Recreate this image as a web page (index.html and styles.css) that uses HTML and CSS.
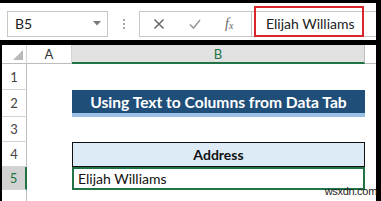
FILE: index.html
```html
<!DOCTYPE html>
<html lang="en">
<head>
    <meta charset="UTF-8">
    <title>Text to Columns</title>
    <link rel="stylesheet" href="styles.css">
</head>
<body>
    <div class="frame">
        <!-- Formula bar -->
        <div class="formula-bar">
            <div class="name-box">
                <span>B5</span>
                <svg class="caret" width="8" height="5" viewBox="0 0 8 5"><path d="M0 0H8L4 4.5Z" fill="#7a7a7a"/></svg>
            </div>
            <div class="dots"><i></i><i></i><i></i></div>
            <div class="fx-box">
                <svg width="12" height="12" viewBox="0 0 12 12"><path d="M1.5 1.5L10.5 10.5M10.5 1.5L1.5 10.5" stroke="#6b6b6b" stroke-width="1.6"/></svg>
                <svg width="12" height="12" viewBox="0 0 12 12"><path d="M1 6.5L4.5 10L11 2" stroke="#9a9a9a" stroke-width="1.6" fill="none"/></svg>
                <span class="fx">f<sub>x</sub></span>
            </div>
            <div class="formula-input">
                <span>Elijah Williams</span>
                <div class="highlight"></div>
            </div>
        </div>

        <!-- Sheet -->
        <div class="sheet">
            <div class="corner"><svg width="10" height="10" viewBox="0 0 10 10"><path d="M10 0V10H0Z" fill="#b9b9b9"/></svg></div>
            <div class="col-head">A</div>
            <div class="col-head active">B</div>
            <div class="col-rest"></div>

            <div class="row-head">1</div>
            <div class="cell"></div>
            <div class="cell"></div>
            <div class="cell"></div>

            <div class="row-head">2</div>
            <div class="cell"></div>
            <div class="cell title">Using Text to Columns from Data Tab</div>
            <div class="cell"></div>

            <div class="row-head">3</div>
            <div class="cell"></div>
            <div class="cell"></div>
            <div class="cell"></div>

            <div class="row-head">4</div>
            <div class="cell"></div>
            <div class="cell header">Address</div>
            <div class="cell"></div>

            <div class="row-head active">5</div>
            <div class="cell"></div>
            <div class="cell selected">Elijah Williams</div>
            <div class="cell"></div>

            <div class="row-head last"></div>
            <div class="cell"></div>
            <div class="cell"></div>
            <div class="cell"></div>
        </div>

        <div class="watermark">wsxdn.com</div>
    </div>
</body>
</html>
```

FILE: styles.css
```css
/* General */
* {
    margin: 0;
    padding: 0;
    box-sizing: border-box;
}

body {
    width: 381px;
    height: 201px;
    background-color: #000;
    font-family: Lato, "Open Sans", sans-serif;
    overflow: hidden;
}

.frame {
    position: relative;
    width: 381px;
    height: 201px;
    padding: 3px 5px 4px 0;
}

/* Formula bar */
.formula-bar {
    display: flex;
    align-items: center;
    height: 37px;
    padding: 6px 0 2px 7px;
    background-color: #fff;
}

.name-box {
    display: flex;
    align-items: center;
    justify-content: space-between;
    width: 101px;
    height: 26px;
    padding: 0 6px 0 7px;
    border: 1px solid #c6c6c6;
    font-size: 14px;
    color: #222;
}

.dots {
    display: flex;
    flex-direction: column;
    gap: 2px;
    width: 31px;
    align-items: center;
}

.dots i {
    display: block;
    width: 2px;
    height: 2px;
    background-color: #a8a8a8;
}

.fx-box {
    display: flex;
    align-items: center;
    width: 112px;
    height: 26px;
    padding-left: 13px;
    gap: 24px;
    border: 1px solid #c6c6c6;
    border-right: none;
}

.fx {
    font-family: "Liberation Serif", serif;
    font-style: italic;
    font-size: 14px;
    color: #666;
}

.fx sub {
    font-size: 10px;
    vertical-align: -1px;
}

.formula-input {
    position: relative;
    flex: 1;
    height: 26px;
    display: flex;
    align-items: center;
    padding-left: 14px;
    border: 1px solid #c6c6c6;
    border-right: none;
    font-size: 14px;
    color: #222;
}

.highlight {
    position: absolute;
    left: 2px;
    top: -6px;
    width: 110px;
    height: 31px;
    border: 2px solid #d9262b;
}

/* Sheet */
.sheet {
    display: grid;
    grid-template-columns: 25px 45px 293px 1fr;
    grid-template-rows: 19px 26px 27px 25px 25px 23px 1fr;
    height: 157px;
    margin-top: 5px;
    margin-left: 2px;
    background-color: #fff;
}

.corner {
    display: flex;
    align-items: flex-end;
    justify-content: flex-end;
    padding: 0 3px 3px 0;
    background-color: #fff;
    border-right: 1px solid #d4d4d4;
    border-bottom: 1px solid #bdbdbd;
}

.col-head {
    display: flex;
    align-items: center;
    justify-content: center;
    font-size: 13px;
    color: #333;
    background-color: #fff;
    border-right: 1px solid #d4d4d4;
    border-bottom: 1px solid #bdbdbd;
}

.col-head.active {
    background-color: #e1e1e1;
    color: #217346;
    border-bottom: 2px solid #217346;
    border-right: 1px solid #bdbdbd;
}

.col-rest {
    border-bottom: 1px solid #bdbdbd;
}

.row-head {
    display: flex;
    align-items: center;
    justify-content: center;
    font-size: 13px;
    color: #444;
    background-color: #fff;
    border-right: 1px solid #bdbdbd;
    border-bottom: 1px solid #d4d4d4;
}

.row-head.active {
    background-color: #d2d2d2;
    color: #217346;
    border-right: 2px solid #217346;
}

.row-head.last {
    border-bottom: none;
}

.cell {
    background-color: #fff;
}

.cell.title {
    display: flex;
    align-items: center;
    justify-content: center;
    height: 27px;
    background-color: #1f4e78;
    border-bottom: 4px solid #9bc2e6;
    color: #fff;
    font-weight: bold;
    font-size: 15.6px;
}

.cell.header {
    display: flex;
    align-items: center;
    justify-content: center;
    background-color: #ddebf7;
    border: 1px solid #111;
    font-weight: bold;
    font-size: 14px;
    color: #111;
}

.cell.selected {
    display: flex;
    align-items: center;
    padding-left: 4px;
    border: 2px solid #217346;
    font-size: 14px;
    color: #111;
}

.watermark {
    position: absolute;
    right: 4px;
    bottom: 4px;
    font-family: "Liberation Sans", sans-serif;
    font-size: 11px;
    color: #222;
    letter-spacing: -0.3px;
}
```
